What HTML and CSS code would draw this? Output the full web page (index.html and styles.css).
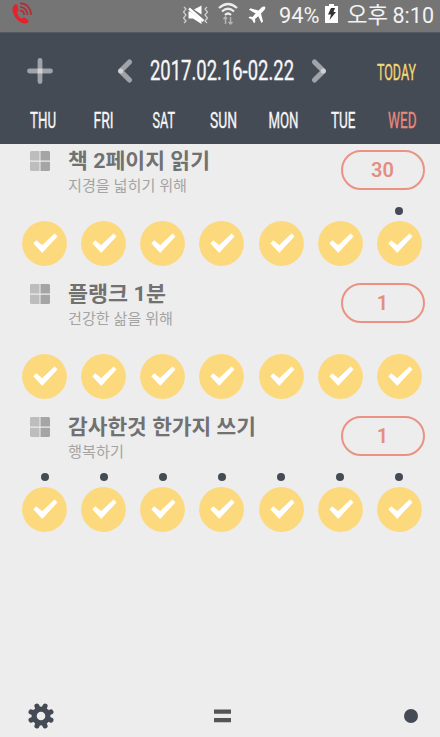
FILE: index.html
```
<!DOCTYPE html>
<html lang="ko">
<head>
<meta charset="utf-8">
<title>2017.02.16-02.22</title>
<link rel="stylesheet" href="styles.css">
</head>
<body>
<svg width="0" height="0" class="defs">
  <symbol id="check" viewBox="0 0 45 45"><circle cx="22.500" cy="22.500" r="22.400" fill="#fcd97c"/><path d="M11.800 22.200L14.200 19.800L20.200 24.600L32.600 13L35 15.400L20.200 31.400Z" fill="#fff" stroke="#fff" stroke-width="1" stroke-linejoin="round"/></symbol>
  <symbol id="tiles" viewBox="0 0 20 20"><path fill="#bdbdbd" d="M1 0H9.500V9.500H0V1zM0 10.800H9.500V20H1L0 19z"/><path fill="#a5a5a5" d="M10.500 0H19L20 1V9.500H10.500zM10.500 10.800H20V19L19 20H10.500z"/></symbol>
</svg>
<div class="status">
  <svg class="call" width="22" height="24" viewBox="0 0 22 24"><path d="M4 2.500C1 4.500 1 9 3 13C5.500 18 10 22 15 21.500C17 21 18 19.500 17.500 18.500L13.500 15.500C12 15 11.300 17 10 16.500C8 15.500 6.500 12.500 6 10.500C6 9.500 7.500 9 7.500 8L6.500 3.500C6 2 5 2 4 2.500Z" fill="#e8202b"/><g fill="none" stroke="#b02e38" stroke-width="1.700"><path d="M9 1.500C15 1 20 6 20 13"/><path d="M9 5C13 5 16.500 8 16.500 13"/><path d="M9 8.500C11.500 8.500 13 10.500 13 13"/></g></svg>
  <svg class="mute" width="28" height="22" viewBox="0 0 28 22"><path fill="#fff" d="M12 5.500L19.500 1.500V10.500zM6.500 7.500H8.500L19.500 16.500V20L11 14.500H6.500z"/><path d="M7 4.500L21.500 17" stroke="#fff" stroke-width="2.400"/><path d="M2 3L4 5L1.500 8L4 11L1.500 14L4 17L2 19M25 3L23 5L25.500 8L23 11L25.500 14L23 17L25 19" fill="none" stroke="#d0d0d0" stroke-width="1.200"/></svg>
  <svg class="wifi" width="20" height="22" viewBox="0 0 20 22"><g fill="none" stroke="#ececec" stroke-width="2.200"><path d="M1 5Q10-3 19 5"/><path d="M4 8.500Q10 3 16 8.500"/><path d="M7 12Q10 9 13 12"/></g><path d="M7.500 21V14M5.500 16L7.500 14L9 16M12.500 14V21M10.500 19L12.500 21L14.500 19" fill="none" stroke="#b4b4b4" stroke-width="1.500"/></svg>
  <svg class="plane" width="18" height="18" viewBox="0 0 18 18"><path fill="#fff" d="M17 .8C16 0 14.500.5 13.500 1.500L10.500 4.600L2.500 2.300L1 3.800L7.600 7.500L4.500 10.900L1.800 10.500L.5 11.800L4 13.500L6 17.200L7.300 16L7 13.100L10.300 10.200L13.500 17L15 15.500L13 7.400L16.200 4.300C17.200 3.200 17.700 1.500 17 .8z"/></svg>
  <svg class="pct" width="42" height="28"><text x="0" y="23" textLength="40.500" lengthAdjust="spacingAndGlyphs">94%</text></svg>
  <svg class="batt" width="13" height="19" viewBox="0 0 13 19"><path fill="#fff" d="M4 0H9V2H13V19H0V2H4z"/><path fill="#333" d="M6 4H10L8.500 8H11L4.500 16L6 10.500H3z"/></svg>
  <svg class="clock" width="88" height="28"><text x="0" y="22.500" textLength="41" lengthAdjust="spacingAndGlyphs">오후</text><text x="45.500" y="23" textLength="41.500" lengthAdjust="spacingAndGlyphs">8:10</text></svg>
</div>
<header>
  <div class="nav">
    <svg class="plus" width="26" height="26" viewBox="0 0 26 26"><path d="M2.500 13H23.500M13 2.500V23.500" stroke="#a0a4a9" stroke-width="4.800" stroke-linecap="round"/><path fill="#cfd1d3" d="M10.600 10.600h4.800v4.800h-4.800z"/></svg>
    <svg class="prev" width="16" height="24" viewBox="0 0 16 24"><path d="M12.500 3L3.500 12L12.500 21" fill="none" stroke="#a0a4a9" stroke-width="5.200" stroke-linecap="round" stroke-linejoin="round"/><circle cx="3.700" cy="12" r="2.500" fill="#cfd1d3"/></svg>
    <svg class="date cond" width="146" height="30"><text x="0" y="24" textLength="144" lengthAdjust="spacingAndGlyphs">2017.02.16-02.22</text></svg>
    <svg class="next" width="16" height="24" viewBox="0 0 16 24"><path d="M3.500 3L12.500 12L3.500 21" fill="none" stroke="#a0a4a9" stroke-width="5.200" stroke-linecap="round" stroke-linejoin="round"/><circle cx="12.300" cy="12" r="2.500" fill="#cfd1d3"/></svg>
    <svg class="today cond" width="48" height="24"><text x="0" y="18.500" textLength="39" lengthAdjust="spacingAndGlyphs">TODAY</text></svg>
  </div>
  <div class="week cond">
    <svg width="60" height="24"><text x="17" y="19" textLength="26" lengthAdjust="spacingAndGlyphs">THU</text></svg>
    <svg width="60" height="24"><text x="20.500" y="19" textLength="20" lengthAdjust="spacingAndGlyphs">FRI</text></svg>
    <svg width="60" height="24"><text x="19.500" y="19" textLength="22.500" lengthAdjust="spacingAndGlyphs">SAT</text></svg>
    <svg width="60" height="24"><text x="17" y="19" textLength="27" lengthAdjust="spacingAndGlyphs">SUN</text></svg>
    <svg width="60" height="24"><text x="15.500" y="19" textLength="30" lengthAdjust="spacingAndGlyphs">MON</text></svg>
    <svg width="60" height="24"><text x="18" y="19" textLength="24.500" lengthAdjust="spacingAndGlyphs">TUE</text></svg>
    <svg class="wed" width="60" height="24"><text x="15" y="19" textLength="28.500" lengthAdjust="spacingAndGlyphs">WED</text></svg>
  </div>
</header>
<main>
  <section class="habit">
    <div class="top">
      <svg class="tiles" width="20" height="20"><use href="#tiles"/></svg>
      <svg class="words" width="260" height="55"><text class="title" x="0" y="23" textLength="142" lengthAdjust="spacingAndGlyphs">책 2페이지 읽기</text><text class="sub" x="0" y="46" textLength="119" lengthAdjust="spacingAndGlyphs">지경을 넓히기 위해</text></svg>
      <div class="pill">30</div>
    </div>
    <div class="dots"><i></i><i></i><i></i><i></i><i></i><i></i><i class="on"></i></div>
    <div class="checks"><svg><use href="#check"/></svg><svg><use href="#check"/></svg><svg><use href="#check"/></svg><svg><use href="#check"/></svg><svg><use href="#check"/></svg><svg><use href="#check"/></svg><svg><use href="#check"/></svg></div>
  </section>
  <section class="habit">
    <div class="top">
      <svg class="tiles" width="20" height="20"><use href="#tiles"/></svg>
      <svg class="words" width="260" height="55"><text class="title" x="0" y="23" textLength="98" lengthAdjust="spacingAndGlyphs">플랭크 1분</text><text class="sub" x="0" y="46" textLength="105" lengthAdjust="spacingAndGlyphs">건강한 삶을 위해</text></svg>
      <div class="pill">1</div>
    </div>
    <div class="dots"><i></i><i></i><i></i><i></i><i></i><i></i><i></i></div>
    <div class="checks"><svg><use href="#check"/></svg><svg><use href="#check"/></svg><svg><use href="#check"/></svg><svg><use href="#check"/></svg><svg><use href="#check"/></svg><svg><use href="#check"/></svg><svg><use href="#check"/></svg></div>
  </section>
  <section class="habit">
    <div class="top">
      <svg class="tiles" width="20" height="20"><use href="#tiles"/></svg>
      <svg class="words" width="260" height="55"><text class="title" x="0" y="23" textLength="188" lengthAdjust="spacingAndGlyphs">감사한것 한가지 쓰기</text><text class="sub" x="0" y="46" textLength="56" lengthAdjust="spacingAndGlyphs">행복하기</text></svg>
      <div class="pill">1</div>
    </div>
    <div class="dots"><i class="on"></i><i class="on"></i><i class="on"></i><i class="on"></i><i class="on"></i><i class="on"></i><i class="on"></i></div>
    <div class="checks"><svg><use href="#check"/></svg><svg><use href="#check"/></svg><svg><use href="#check"/></svg><svg><use href="#check"/></svg><svg><use href="#check"/></svg><svg><use href="#check"/></svg><svg><use href="#check"/></svg></div>
  </section>
</main>
<footer>
  <svg width="26" height="26" viewBox="-13 -13 26 26"><g stroke="#454b55" stroke-width="5" stroke-linecap="round"><path d="M-4.100-10L4.100 10M4.100-10L-4.100 10M-10-4.100L10 4.100M-10 4.100L10-4.100"/></g><circle r="9.500" fill="#454b55"/><circle r="4.300" fill="#ededed"/></svg>
  <svg class="eq" width="17" height="14"><path fill="#555" d="M0 .5h17v4.200H0zM0 9h17v4.200H0z"/></svg>
  <i></i>
</footer>
</body>
</html>
```
FILE: styles.css
```
* { box-sizing: border-box; }
body {
  margin: 0;
  width: 440px;
  height: 737px;
  overflow: hidden;
  display: flex;
  flex-direction: column;
  background: #ededed;
  font-family: Roboto, "Noto Sans CJK KR", sans-serif;
}
svg { display: block; flex: none; overflow: visible; }
.defs { position: absolute; }

.status {
  height: 32px;
  display: flex;
  align-items: flex-start;
  background: #757575;
  fill: #f2f2f2;
  font-size: 22.500px;
}
.call { margin: 2px 0 0 11px; }
.mute { margin: 4px 0 0 149px; }
.wifi { margin: 3px 0 0 8px; }
.plane { margin: 6px 0 0 10px; }
.pct { margin-left: 13px; }
.batt { margin: 4px 0 0 4px; }
.clock { margin-left: 9px; }

header { height: 112px; background: #454b55; border-top: 1px solid #555963; }
.cond { fill: #f6f6f6; stroke: #f6f6f6; stroke-width: .35px; font-size: 22px; font-weight: 400; }
.nav { height: 75px; display: flex; align-items: center; }
.plus { margin-left: 27px; }
.prev { margin-left: 64px; }
.date { margin-left: 17px; font-size: 28px; }
.next { margin-left: 15px; }
.today { margin: 4px 0 0 50px; fill: #f4d775; stroke: #f4d775; }
.week { display: flex; padding: 1px 0 0 13px; }
.week .wed { fill: #e8887c; stroke: #e8887c; }

main { flex: 1; padding-top: 1px; }
.habit { height: 133.200px; }
.top { height: 62px; display: flex; }
.tiles { margin: 5.500px 0 0 29.500px; }
.words { margin-left: 18.500px; }
.title { font-size: 21px; font-weight: 700; fill: #717171; }
.sub { font-size: 15px; fill: #a4a4a4; }
.pill {
  width: 84px;
  height: 40px;
  margin: 4.500px 0 0 12.500px;
  border: 2px solid #ea9284;
  border-radius: 20px;
  color: #e48d81;
  font-size: 20px;
  font-weight: 600;
  line-height: 37px;
  text-align: center;
}
.dots, .checks { display: flex; justify-content: space-between; padding: 0 18px 0 22px; }
.dots { height: 14px; padding: 0 36.500px 0 40.500px; }
.dots i { width: 8px; height: 8px; border-radius: 50%; }
.dots .on { background: #454b55; }
.checks svg { width: 45px; height: 45px; }

footer {
  height: 42px;
  display: grid;
  grid-template-columns: 185.500px 1fr 14px;
  align-items: center;
  padding: 0 22px 0 28px;
}
footer i { width: 14px; height: 14px; border-radius: 50%; background: #454b55; }
```
